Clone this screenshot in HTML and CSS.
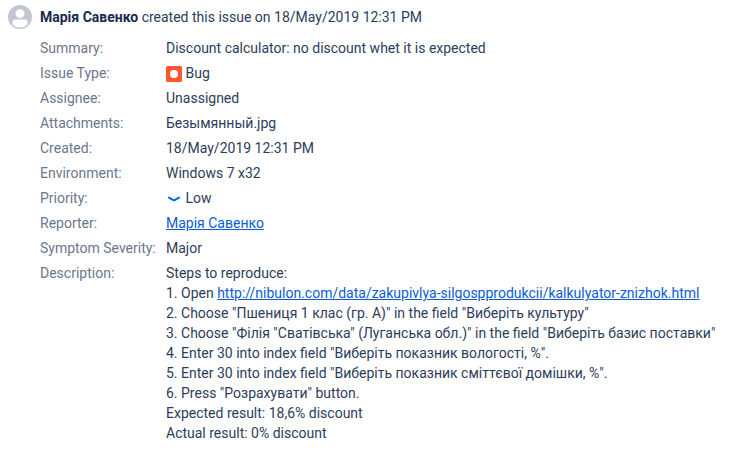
FILE: index.html
```
<!DOCTYPE html>
<html lang="en">
<head>
<meta charset="utf-8">
<title>Issue history</title>
<link rel="stylesheet" href="styles.css">
</head>
<body>
<article class="entry">
  <svg class="avatar" viewBox="0 0 24 24"><circle cx="12" cy="12" r="12" fill="#c1c7d0"/><circle cx="12" cy="8.6" r="4.4" fill="#fff"/><path d="M4.5 19.5V17a2.5 2.5 0 0 1 2.5-2.5h10a2.5 2.5 0 0 1 2.5 2.5v2.5a10.6 10.6 0 0 1-15 0z" fill="#fff"/></svg>
  <div class="body">
    <header class="heading"><b>Марія Савенко</b> created this issue on 18/May/2019 12:31 PM</header>
    <dl class="fields">
      <dt>Summary:</dt><dd>Discount calculator: no discount whet it is expected</dd>
      <dt>Issue Type:</dt><dd class="with-icon"><svg class="icon" viewBox="0 0 16 16"><rect width="16" height="16" rx="1.5" fill="#ff5630"/><circle cx="8" cy="8" r="4" fill="#fff"/></svg>Bug</dd>
      <dt>Assignee:</dt><dd>Unassigned</dd>
      <dt>Attachments:</dt><dd>Безымянный.jpg</dd>
      <dt>Created:</dt><dd>18/May/2019 12:31 PM</dd>
      <dt>Environment:</dt><dd>Windows 7 x32</dd>
      <dt>Priority:</dt><dd class="with-icon"><svg class="icon" viewBox="0 0 16 16"><path d="M3 6.6l4.4 2.5q.6.3 1.2 0L13 6.6" fill="none" stroke="#0065ff" stroke-width="2" stroke-linecap="round" stroke-linejoin="round"/></svg>Low</dd>
      <dt>Reporter:</dt><dd><a href="#">Марія Савенко</a></dd>
      <dt>Symptom Severity:</dt><dd>Major</dd>
      <dt>Description:</dt>
      <dd>Steps to reproduce:<br>
        1. Open <a href="#">http://nibulon.com/data/zakupivlya-silgospprodukcii/kalkulyator-znizhok.html</a><br>
        2. Choose "Пшениця 1 клас (гр. А)" in the field "Виберіть культуру"<br>
        3. Choose "Філія "Сватівська" (Луганська обл.)" in the field "Виберіть базис поставки"<br>
        4. Enter 30 into index field "Виберіть показник вологості, %".<br>
        5. Enter 30 into index field "Виберіть показник сміттєвої домішки, %".<br>
        6. Press "Розрахувати" button.<br>
        Expected result: 18,6% discount<br>
        Actual result: 0% discount</dd>
    </dl>
  </div>
</article>
</body>
</html>
```
FILE: styles.css
```
body {
  margin: 0;
  background: #fff;
  color: #2c3d5b;
  font: 14px/20px Roboto, sans-serif;
}
.entry {
  display: flex;
  gap: 8px;
  padding: 5px 8px;
}
.avatar {
  width: 24px;
  height: 24px;
  flex: none;
}
.body {
  padding-top: 2px;
}
.heading b {
  color: #172b4d;
  font-weight: 700;
}
.fields {
  display: grid;
  grid-template-columns: 126px auto;
  row-gap: 5px;
  margin: 11px 0 0;
  white-space: nowrap;
}
dt {
  color: #6b778c;
}
dd {
  margin: 0;
}
.with-icon {
  display: flex;
  align-items: center;
  gap: 3.5px;
}
.icon {
  width: 16px;
  height: 16px;
  margin-top: 2px;
}
a {
  color: #0b5cd5;
  text-decoration: underline;
}
```
